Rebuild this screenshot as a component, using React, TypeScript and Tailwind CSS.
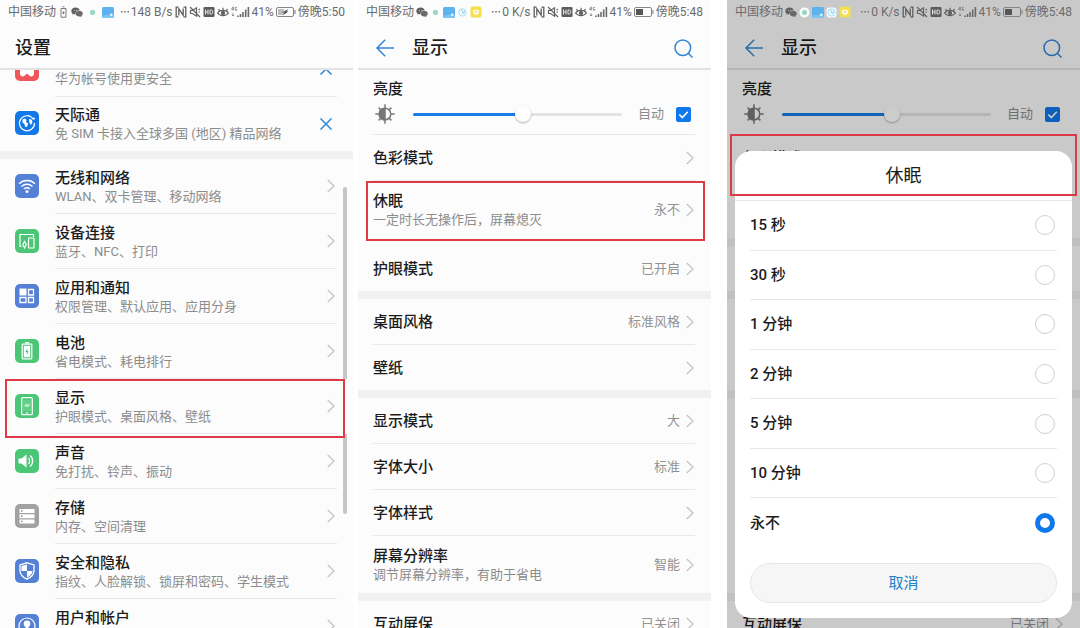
import React, { useId, useState } from 'react'
import clsx from 'clsx'

type StatusIcon = 'powersave' | 'wechat' | 'dot' | 'gallery' | 'globe' | 'mail'

function StatusGlyph({ name }: { name: StatusIcon }) {
  switch (name) {
    case 'powersave':
      return (
        <svg viewBox="0 0 7 12" className="h-3 w-[7px]" fill="none" stroke="#7a7a7a">
          <path d="M2.5 .8h2M1 2.5h5v8.7H1zM2.2 6.8h2.6M3.5 5.4v2.8" />
        </svg>
      )
    case 'wechat':
      return (
        <svg viewBox="0 0 12 12" className="h-3 w-3">
          <path d="M4.6 1.5C2.2 1.5.3 3 .3 5c0 1 .5 1.900 1.400 2.500l-.4 1.300 1.600-.8c.5.2 1 .2 1.700.2-.5-2 1.400-3.900 4.200-3.900C8.400 2.700 6.700 1.500 4.600 1.500z" fill="#5f5f5f" />
          <path d="M8.200 4.800c-1.900 0-3.500 1.300-3.500 2.900S6.300 10.500 8.200 10.500l1-.1 1.400.8-.3-1.300c.8-.5 1.500-1.300 1.500-2.200 0-1.600-1.600-2.900-3.600-2.900z" fill="#6a6a6a" />
          <circle cx="3.300" cy="4.200" r=".5" fill="#ddd" />
          <circle cx="5.900" cy="4.200" r=".5" fill="#ddd" />
        </svg>
      )
    case 'dot':
      return (
        <svg viewBox="0 0 11 11" className="h-[11px] w-[11px]">
          <circle cx="5.500" cy="5.500" r="5" fill="#fdfdfd" />
          <circle cx="5.500" cy="5.500" r="2.700" fill="#a5dcc6" />
          <circle cx="5.500" cy="5.500" r="1" fill="#86c9d2" />
        </svg>
      )
    case 'gallery':
      return (
        <svg viewBox="0 0 12 11" className="h-[11px] w-3">
          <rect width="12" height="11" rx="1.500" fill="#5cb3ee" />
          <path d="M0 8.500l8-1 4 1V9.500A1.500 1.500 0 0 1 10.500 11h-9A1.500 1.500 0 0 1 0 9.500z" fill="#7cc5f5" />
          <circle cx="9.300" cy="7.800" r="1.300" fill="#e8f6ff" />
        </svg>
      )
    case 'globe':
      return (
        <svg viewBox="0 0 11 11" className="h-[11px] w-[11px]">
          <rect x=".5" y=".5" width="10" height="10" rx="3" fill="#f6fcff" />
          <circle cx="5.500" cy="5.500" r="3.600" fill="none" stroke="#a8dcf2" />
          <path d="M4 3l2 1.500-1 2M7.500 4l-1 3" fill="none" stroke="#8ad3e4" />
        </svg>
      )
    case 'mail':
      return (
        <svg viewBox="0 0 12 12" className="h-3 w-3">
          <rect x=".5" y=".5" width="11" height="11" rx="2" fill="#f4e04a" />
          <path d="M2.800 4.500c1-1 5.400-1 6.400 0C9.200 7.500 8 9 6 9S2.800 7.500 2.800 4.500z" fill="#fffbe2" />
          <path d="M5 5.300l1 1 1-1" fill="none" stroke="#e3a94a" />
        </svg>
      )
  }
}

function StatusBar({
  icons,
  speed,
  time,
  charging,
}: {
  icons: StatusIcon[]
  speed: string
  time: string
  charging?: boolean
}) {
  return (
    <div className="relative z-20 flex h-6 items-center justify-between px-2 text-[12px] leading-6 whitespace-nowrap text-[#6b6b6b]">
      <div className={clsx('flex items-center', icons.length > 4 ? 'gap-0.5' : 'gap-1')}>
        <span>中国移动</span>
        {icons.map((name) => (
          <StatusGlyph key={name} name={name} />
        ))}
      </div>
      <div className="flex items-center gap-0.5">
        <svg viewBox="0 0 8 2" className="h-0.5 w-2" fill="#777">
          <path d="M0 0h1.600v1.600H0zM3.200 0h1.600v1.600H3.200zM6.400 0H8v1.600H6.400z" />
        </svg>
        <span>{speed}</span>
        <svg viewBox="0 0 12 12" className="h-3 w-3" fill="none" stroke="#5e5e5e" strokeWidth="1.300">
          <path d="M3.500 1.200H1.200v9.600h2.300M8.500 1.200h2.300v9.600H8.500M3.800 9.500V2.800l4.400 6.400V2.500" />
        </svg>
        <svg viewBox="0 0 12 12" className="h-3 w-3" fill="none" stroke="#626262" strokeWidth="1.200">
          <path d="M1.500 4.500h2L7.500 1.800v8.400L3.500 7.500h-2zM1 1l10 10M9.500 4l1.500-1M9.500 6H11" />
        </svg>
        <svg viewBox="0 0 12 12" className="h-3 w-3">
          <rect x=".5" y="1" width="11" height="10" rx="1" fill="#5c5c5c" />
          <path d="M2.500 3.500v5M5 3.500v5M2.500 6H5M7 4h1.300c1 0 1.400.8 1.400 2s-.4 2-1.400 2H7z" fill="none" stroke="#e6e6e6" />
        </svg>
        <svg viewBox="0 0 12 12" className="h-3 w-3" fill="none" stroke="#5e5e5e" strokeWidth="1.200">
          <path d="M.6 7C3 3.600 9 3.600 11.400 7 9 10.400 3 10.400.6 7zM6 4.300V1.800M2.800 4.800L1.500 3M9.200 4.800L10.500 3" />
          <circle cx="6" cy="7" r="1.500" fill="#5e5e5e" />
        </svg>
        <svg viewBox="0 0 19 12" className="h-3 w-[19px]" fill="none" stroke="#6a6a6a">
          <path d="M2.200 4.500V.8L.5 3.300h2.200M5.800 1.500H4.300v2.700h1.500V3M2 7v3M.8 8.800L2 10l1.200-1.200" strokeWidth=".7" />
          <path d="M7 11V9.500M9.500 11V8M12 11V6M14.700 11V3.500M17.400 11V1" strokeWidth="1.600" />
        </svg>
        <span>41%</span>
        <svg viewBox="0 0 20 10" className="h-2.5 w-5">
          <rect x=".5" y=".5" width="17" height="9" rx="1.500" fill="none" stroke="#858585" />
          <path d="M19 3v4" stroke="#777" />
          {charging ? (
            <>
              <rect x="2" y="2" width="6" height="6" fill="#bdbdbd" />
              <path d="M12.500 2L6 5.500h2.500L7 8.200l5.500-3.700h-2z" fill="#4c4c4c" />
            </>
          ) : (
            <rect x="2" y="2" width="7" height="6" fill="#565656" />
          )}
        </svg>
        <span>{time}</span>
      </div>
    </div>
  )
}

function Chevron() {
  return (
    <svg viewBox="0 0 8 14" className="h-3.5 w-2 shrink-0" fill="none" stroke="#c8c8c8" strokeWidth="1.500">
      <path d="M.8 1l6.200 6-6.200 6" />
    </svg>
  )
}

function Highlight({ className }: { className: string }) {
  return <div className={clsx('pointer-events-none absolute z-30 border-2 border-[#dc3a47]', className)} />
}

function Band() {
  return <div className="h-2 bg-[#f1f1f1]" />
}

const tileColors = {
  red: 'bg-[#f0555c]',
  sky: 'bg-[#1278ea]',
  blue: 'bg-[#5480d6]',
  green: 'bg-[#4bc676]',
  gray: 'bg-[#a2a2a2]',
}

interface SettingItem {
  title: string
  desc: string
  color: keyof typeof tileColors
  icon: React.ReactNode
}

const promoItems: SettingItem[] = [
  {
    title: '帐号安全',
    desc: '华为帐号使用更安全',
    color: 'red',
    icon: <path d="M5 13v3.500c0 2.500 2.500 3.800 4.500 2.300L12 16.500l2.500 2.300c2 1.500 4.500.2 4.500-2.300V13z" fill="#fff" />,
  },
  {
    title: '天际通',
    desc: '免 SIM 卡接入全球多国 (地区) 精品网络',
    color: 'sky',
    icon: (
      <>
        <path d="M18.500 8.500A7.500 7.500 0 1 0 19.500 12M15.500 5.200A7.500 7.500 0 0 0 12 4.500" fill="none" stroke="#fff" strokeWidth="1.200" />
        <path d="M7.500 8.500l2.500-1 1.500 1.500-.5 2 2 1.500-1 3.500-2-.5-.5-2.500-2-1.500zM14 8l2.500.5 1 2.500-1.500 3-1.500-2z" fill="#fff" />
        <circle cx="19" cy="7.500" r="1" fill="#fff" />
      </>
    ),
  },
]

const settingItems: SettingItem[] = [
  {
    title: '无线和网络',
    desc: 'WLAN、双卡管理、移动网络',
    color: 'blue',
    icon: (
      <>
        <path d="M4 9.800c4.500-4.400 11.500-4.400 16 0M6.500 12.500c3.200-3 7.800-3 11 0M9 15c1.800-1.500 4.200-1.500 6 0" fill="none" stroke="#fff" strokeWidth="1.300" />
        <circle cx="12" cy="17.500" r="1.500" fill="#fff" />
      </>
    ),
  },
  {
    title: '设备连接',
    desc: '蓝牙、NFC、打印',
    color: 'green',
    icon: (
      <g fill="none" stroke="#fff" strokeWidth="1.200">
        <path d="M6.500 17.500H5v-12h13.500V8" />
        <rect x="13.500" y="9" width="5.500" height="10" rx=".5" />
        <path d="M9.500 12.500l1.700 3-1.700 3.500-1.700-3.500z" />
      </g>
    ),
  },
  {
    title: '应用和通知',
    desc: '权限管理、默认应用、应用分身',
    color: 'blue',
    icon: (
      <>
        <path d="M4.500 4.500h7v7h-7z" fill="#fff" />
        <path d="M13.500 5.500h5v5.500h-5zM5 13.500h6v5H5zM13.500 13.500h5v5h-5z" fill="none" stroke="#fff" strokeWidth="1.300" />
      </>
    ),
  },
  {
    title: '电池',
    desc: '省电模式、耗电排行',
    color: 'green',
    icon: (
      <>
        <path d="M10 3h4v1.500h-4z" fill="#fff" />
        <rect x="7.200" y="5.200" width="9.600" height="14.600" rx=".5" fill="none" stroke="#fff" strokeWidth="1.200" />
        <path d="M8.800 6.800h6.400v11.400H8.800z" fill="#fff" />
        <path d="M12.400 9.500L10.500 13h1.300l-.2 2.800 1.900-3.500h-1.300z" fill="#3aae80" />
      </>
    ),
  },
  {
    title: '显示',
    desc: '护眼模式、桌面风格、壁纸',
    color: 'green',
    icon: (
      <>
        <rect x="6.700" y="3.700" width="10.600" height="17" rx="1" fill="none" stroke="#fff" strokeWidth="1.200" />
        <path d="M8 6h8v11H8z" fill="#fff" fillOpacity=".15" />
        <path d="M9.500 12.300l2.300-2.500M12.200 13l2.300-2.500M11 12.500l2-2" fill="none" stroke="#fff" />
        <path d="M10.500 19h3" stroke="#fff" />
      </>
    ),
  },
  {
    title: '声音',
    desc: '免打扰、铃声、振动',
    color: 'green',
    icon: (
      <>
        <path d="M3.500 9.500h3l5-4v13l-5-4h-3z" fill="#fff" />
        <path d="M13.500 9c1.500 1.500 1.500 4.500 0 6M15 6.500c3.500 2.500 3.500 8.500 0 11" fill="none" stroke="#fff" strokeWidth="1.300" />
      </>
    ),
  },
  {
    title: '存储',
    desc: '内存、空间清理',
    color: 'gray',
    icon: (
      <>
        <path d="M4.500 5h15v4h-15zM4.500 10.200h15v4h-15zM4.500 15.400h15v4h-15z" fill="#fff" />
        <path d="M6 7h1.500M6 12.200h1.500M6 17.400h1.500" stroke="#8a8a8a" strokeWidth="1.400" />
      </>
    ),
  },
  {
    title: '安全和隐私',
    desc: '指纹、人脸解锁、锁屏和密码、学生模式',
    color: 'blue',
    icon: (
      <>
        <path d="M12 3.800l7 2.200v5.500c0 4-2.500 6.800-7 8.700-4.500-1.900-7-4.700-7-8.700V6z" fill="none" stroke="#fff" strokeWidth="1.300" />
        <path d="M12 5.500V12H6.500V7zM12 12h5.500c-.2 3-2 5-5.500 6.600z" fill="#fff" />
      </>
    ),
  },
  {
    title: '用户和帐户',
    desc: '用户、多用户、云帐户',
    color: 'blue',
    icon: (
      <>
        <circle cx="12" cy="12" r="8" fill="none" stroke="#fff" strokeWidth="1.200" />
        <circle cx="12" cy="9.800" r="3.300" fill="#fff" />
        <path d="M10.500 12h3v3c2 .5 3.500 1.500 4 2.500a8 8 0 0 1-11 0c.5-1 2-2 4-2.500z" fill="#fff" />
      </>
    ),
  },
]

function Tile({ color, icon }: { color: SettingItem['color']; icon: React.ReactNode }) {
  return (
    <span className={clsx('mb-0.5 size-6 shrink-0 rounded-[5px]', tileColors[color])}>
      <svg viewBox="0 0 24 24" className="size-6">{icon}</svg>
    </span>
  )
}

function ItemText({ title, desc }: { title: string; desc: string }) {
  return (
    <span className="block min-w-0 whitespace-nowrap">
      <span className="block text-[15px] leading-5 font-medium text-[#1c1c1c]">{title}</span>
      <span className="block text-[13px] leading-[18px] text-[#8c8c8c]">{desc}</span>
    </span>
  )
}

function SettingsScreen() {
  return (
    <section className="flex min-w-0 flex-1 flex-col overflow-hidden bg-[#fcfcfc]">
      <header className="relative z-10 h-[70px] shrink-0 border-b-2 border-[#e3e3e3] bg-[#fcfcfc]">
        <StatusBar icons={['powersave', 'wechat', 'dot', 'gallery']} speed="148 B/s" time="傍晚5:50" charging />
        <h1 className="px-[15px] pt-2.5 text-[18px] leading-7 font-medium text-[#1c1c1c]">设置</h1>
      </header>
      <div className="relative min-h-0 flex-1">
        <div className="absolute top-[117px] right-1.5 h-[327px] w-1 rounded-full bg-[#c6c6c6]" />
        <ul className="-mt-7">
          {promoItems.map((item, i) => (
            <li key={item.title} className="flex gap-4 pl-[15px]">
              <div className="flex items-center">
                <Tile color={item.color} icon={item.icon} />
              </div>
              <div
                className={clsx(
                  'mr-4 flex flex-1 items-center justify-between',
                  i === 0 ? 'h-[55px] border-b border-[#e8e8e8]' : 'h-[54px]',
                )}
              >
                <ItemText title={item.title} desc={item.desc} />
                <button type="button" aria-label="关闭" className="mr-[5px]">
                  <svg viewBox="0 0 12 12" className="size-3" fill="none" stroke="#2f86d6" strokeWidth="1.500">
                    <path d="M.5.5l11 11M11.500.5l-11 11" />
                  </svg>
                </button>
              </div>
            </li>
          ))}
        </ul>
        <Band />
        <ul>
          {settingItems.map((item) => (
            <li key={item.title} className={clsx(item.title === '显示' && 'relative z-10 bg-[#fcfcfc]')}>
              <button type="button" className="flex w-full items-center gap-4 pl-[15px] text-left">
                <Tile color={item.color} icon={item.icon} />
                <span className="mr-4 flex h-[55px] flex-1 items-center justify-between border-b border-[#e8e8e8] pr-0.5">
                  <span className="pt-0.5">
                    <ItemText title={item.title} desc={item.desc} />
                  </span>
                  <Chevron />
                </span>
              </button>
              {item.title === '显示' && <Highlight className="top-0 right-2 left-[5px] h-[59px]" />}
            </li>
          ))}
        </ul>
      </div>
    </section>
  )
}

function Row({
  title,
  desc,
  value,
  divider,
}: {
  title: string
  desc?: string
  value?: string
  divider?: boolean
}) {
  return (
    <button
      type="button"
      className={clsx(
        'mr-4 ml-[15px] flex items-center justify-between border-[#e8e8e8] pr-px text-left',
        desc ? 'h-[57px]' : divider ? 'h-[46px] border-b' : 'h-[45px]',
      )}
    >
      {desc ? (
        <ItemText title={title} desc={desc} />
      ) : (
        <span className="text-[15px] leading-5 font-medium text-[#1c1c1c]">{title}</span>
      )}
      <span className="flex items-center gap-1.5">
        {value && <span className="text-[13px] leading-[18px] text-[#929292]">{value}</span>}
        <Chevron />
      </span>
    </button>
  )
}

function Brightness() {
  const [level, setLevel] = useState(53)
  const [auto, setAuto] = useState(true)
  const id = useId()

  return (
    <div className="mr-4 ml-[15px] h-[65px] border-b border-[#e8e8e8] pt-[9px]">
      <label htmlFor={id} className="block text-[15px] leading-5 font-medium text-[#1c1c1c]">亮度</label>
      <div className="flex h-[30px] items-center pr-1">
        <svg viewBox="0 0 20 20" className="mx-0.5 size-5 shrink-0" fill="none" stroke="#777" strokeWidth="1.500">
          <circle cx="10" cy="10" r="5.800" />
          <path d="M10 4.200a5.800 5.800 0 0 0 0 11.600z" fill="#777" />
          <path d="M10 .3v3.500M10 16.200v3.500M.3 10h3.500M16.200 10h3.500M3.600 3.600l2.200 2.200M14.200 14.200l2.200 2.200M3.600 16.400l2.200-2.200M14.200 5.800l2.200-2.200" />
        </svg>
        <input
          id={id}
          type="range"
          value={level}
          onChange={(e) => setLevel(Number(e.target.value))}
          className="ml-4 h-[3px] min-w-0 flex-1 appearance-none rounded-full [&::-webkit-slider-thumb]:size-4 [&::-webkit-slider-thumb]:appearance-none [&::-webkit-slider-thumb]:rounded-full [&::-webkit-slider-thumb]:bg-white [&::-webkit-slider-thumb]:shadow-[0_1px_2px_rgba(0,0,0,0.3)]"
          style={{ background: `linear-gradient(to right, #187ce8 ${level}%, #e3e3e3 ${level}%)` }}
        />
        <label className="ml-4 flex items-center gap-3 text-[13px] text-[#8c8c8c]">
          自动
          <span className="grid">
            <input
              type="checkbox"
              checked={auto}
              onChange={(e) => setAuto(e.target.checked)}
              className="size-[15px] appearance-none rounded-[2px] border border-[#b5b5b5] [grid-area:1/1] checked:border-[#0f78ea] checked:bg-[#0f78ea]"
            />
            {auto && (
              <svg viewBox="0 0 15 15" className="pointer-events-none size-[15px] [grid-area:1/1]" fill="none" stroke="#fff" strokeWidth="1.600">
                <path d="M3.300 7.500l3 3 5.500-5.700" />
              </svg>
            )}
          </span>
        </label>
      </div>
    </div>
  )
}

const sleepOptions = ['15 秒', '30 秒', '1 分钟', '2 分钟', '5 分钟', '10 分钟', '永不']

function SleepDialog() {
  const [selected, setSelected] = useState('永不')

  return (
    <div
      role="dialog"
      aria-label="休眠"
      className="absolute inset-x-2 top-[151px] bottom-2.5 z-20 flex flex-col rounded-2xl bg-white pb-[15px]"
    >
      <h2 className="h-[50px] shrink-0 border-b border-[#e8e8e8] text-center text-[18px] leading-[50px] text-[#1c1c1c]">休眠</h2>
      <div className="mx-[15px] flex min-h-0 flex-1 flex-col">
        {sleepOptions.map((option) => (
          <label
            key={option}
            className="flex flex-1 items-center justify-between border-b border-[#e8e8e8] pr-0.5 text-[15px] font-medium text-[#1c1c1c] last:border-transparent"
          >
            {option}
            <input
              type="radio"
              name="sleep"
              checked={selected === option}
              onChange={() => setSelected(option)}
              className="size-5 appearance-none rounded-full border border-[#cfcfcf] checked:border-[5px] checked:border-[#0f78ea]"
            />
          </label>
        ))}
      </div>
      <button
        type="button"
        className="mx-[15px] mt-[15px] h-10 shrink-0 rounded-full border border-[#e6e6e6] bg-[#f6f6f6] text-[15px] text-[#2080c8]"
      >
        取消
      </button>
    </div>
  )
}

function DisplayScreen({ dialog }: { dialog?: boolean }) {
  return (
    <section className="relative flex min-w-0 flex-1 flex-col overflow-hidden bg-[#fcfcfc]">
      <header className="h-[70px] shrink-0 border-b-2 border-[#e3e3e3]">
        <StatusBar icons={['wechat', 'dot', 'gallery', 'globe', 'mail']} speed="0 K/s" time="傍晚5:48" />
        <div className="flex items-center px-[18px] pt-2.5">
          <button type="button" aria-label="返回">
            <svg viewBox="0 0 18 18" className="size-[18px]" fill="none" stroke="#2f86d6" strokeWidth="1.500">
              <path d="M18 9H1M9.200.8L1 9l8.200 8.200" />
            </svg>
          </button>
          <h1 className="ml-[18px] flex-1 text-[18px] leading-7 font-medium text-[#1c1c1c]">显示</h1>
          <button type="button" aria-label="搜索">
            <svg viewBox="0 0 19 19" className="size-[19px]" fill="none" stroke="#2f86d6" strokeWidth="1.500">
              <circle cx="8.800" cy="8.800" r="7.800" />
              <path d="M14.300 14.300l4.200 4.200" />
            </svg>
          </button>
        </div>
      </header>
      <div className="flex flex-col">
        <Brightness />
        <Row title="色彩模式" divider />
        <div className="relative flex flex-col">
          <Row title="休眠" desc="一定时长无操作后，屏幕熄灭" value="永不" />
          {dialog ? <Band /> : <div className="h-2" />}
          {!dialog && <Highlight className="top-0 right-1.5 left-2 h-[60px]" />}
        </div>
        <Row title="护眼模式" value="已开启" />
        <Band />
        <Row title="桌面风格" value="标准风格" divider />
        <Row title="壁纸" />
        <Band />
        <Row title="显示模式" value="大" divider />
        <Row title="字体大小" value="标准" divider />
        <Row title="字体样式" divider />
        <Row title="屏幕分辨率" desc="调节屏幕分辨率，有助于省电" value="智能" />
        <Band />
        <Row title="互动屏保" value="已关闭" />
      </div>
      {dialog && (
        <>
          <div className="absolute inset-0 z-10 bg-black/20" />
          <SleepDialog />
          <Highlight className="inset-x-[3px] top-[134px] h-[62px]" />
        </>
      )}
    </section>
  )
}

export default function App() {
  return (
    <main className="flex h-screen overflow-hidden bg-white font-[Roboto,'Noto_Sans_CJK_SC',sans-serif]">
      <SettingsScreen />
      <div className="w-[5px] shrink-0" />
      <DisplayScreen />
      <div className="w-4 shrink-0" />
      <DisplayScreen dialog />
    </main>
  )
}
